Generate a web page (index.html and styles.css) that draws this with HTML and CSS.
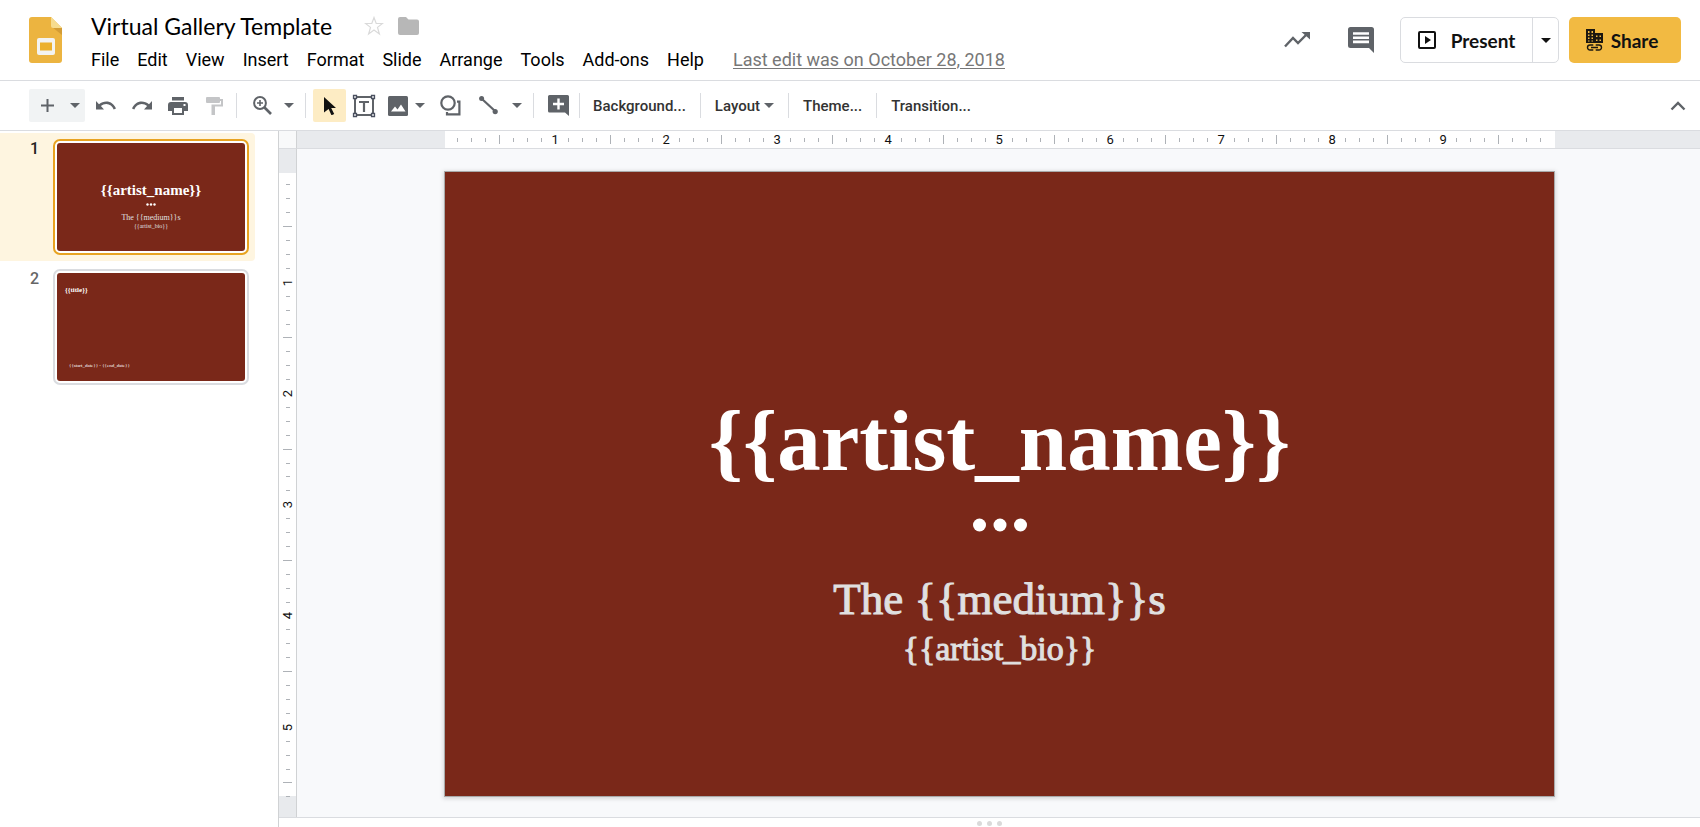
FILE: index.html
```html
<!DOCTYPE html>
<html lang="en">
<head>
<meta charset="utf-8">
<title>Virtual Gallery Template</title>
<link rel="stylesheet" href="styles.css">
</head>
<body>
<div class="app">
  <header class="header">
    <svg class="logo" viewBox="0 0 33 46" width="33" height="46" aria-label="Slides">
      <path fill="#ecb440" d="M3 0H22L33 11V43a3 3 0 0 1-3 3H3a3 3 0 0 1-3-3V3a3 3 0 0 1 3-3z"/>
      <path fill="#d39c35" d="M23 10l10 8v-7z"/>
      <path fill="#f6dc8f" d="M22 0l11 11H24a2 2 0 0 1-2-2z"/>
      <rect x="8" y="21" width="18" height="17" rx="2" fill="#f3f3f1"/>
      <rect x="11" y="25.500" width="12" height="8" fill="#ecb02c"/>
    </svg>
    <div class="title-block">
      <div class="title-row">
        <h1 class="title">Virtual Gallery Template</h1>
        <button class="plain" aria-label="Star"><svg width="20" height="20" viewBox="0 0 20 20"><path fill="none" stroke="#dadada" stroke-width="1.200" d="M10 1.500l2.200 6h6.300l-5 3.900 1.900 6.600L10 14l-5.400 4 1.900-6.600-5-3.900h6.300z"/></svg></button>
        <button class="plain" aria-label="Move"><svg width="21" height="18" viewBox="0 0 21 18"><path fill="#b7b7b7" d="M2 0h6l2.500 2.500H19a2 2 0 0 1 2 2V16a2 2 0 0 1-2 2H2a2 2 0 0 1-2-2V2a2 2 0 0 1 2-2z"/></svg></button>
      </div>
      <nav class="menu">
        <button>File</button><button>Edit</button><button>View</button><button>Insert</button><button>Format</button><button>Slide</button><button>Arrange</button><button>Tools</button><button>Add-ons</button><button>Help</button>
        <a class="last-edit" href="#">Last edit was on October 28, 2018</a>
      </nav>
    </div>
    <div class="actions">
      <button class="plain" aria-label="Activity"><svg width="26" height="18" viewBox="0 0 26 18"><path fill="none" stroke="#5f6368" stroke-width="2.400" d="M1 15.500l8-8.500 5 5L23.500 2.500"/><path fill="#5f6368" d="M17.500 1H26v7.500z"/></svg></button>
      <button class="plain" aria-label="Comments"><svg width="26" height="26" viewBox="0 0 26 26"><path fill="#5f6368" d="M2.500 0h21A2.500 2.500 0 0 1 26 2.500V26l-5-5H2.500A2.500 2.500 0 0 1 0 18.500v-16A2.500 2.500 0 0 1 2.500 0z"/><path stroke="#fff" stroke-width="2.600" d="M5 6.500h16M5 10.700h16M5 14.900h16"/></svg></button>
      <div class="present">
        <button class="present-main"><svg width="18" height="18" viewBox="0 0 18 18"><rect x="1" y="1" width="16" height="16" rx="1" fill="none" stroke="#111" stroke-width="2"/><path fill="#111" d="M7 5l6 4-6 4z"/></svg>Present</button>
        <button class="present-more" aria-label="Present options"><svg width="10" height="5" viewBox="0 0 10 5"><path fill="#111" d="M0 0h10L5 5z"/></svg></button>
      </div>
      <button class="share"><svg width="17" height="23" viewBox="0 0 17 23"><path fill="#1b1710" d="M0 0h9v4h8v10H0z"/><path fill="#f2ba42" d="M2 2h1.500v2H2zM5.500 2H7v2H5.500zM2 5.500h1.500v1.500H2zM5.500 5.500H7v1.500H5.500zM2 8.500h1.500v1.500H2zM5.500 8.500H7v1.500H5.500zM2 11.500h1.500v1H2zM5.500 11.500H7v1H5.500zM10 6.500h1.500v1.500H10zM13.500 6.500H15v1.500h-1.500zM10 10.500h1.500v1.500H10zM13.500 10.500H15v1.500h-1.500z"/><path fill="none" stroke="#1b1710" stroke-width="1.400" d="M7.300 16H4a2.500 2.500 0 0 0 0 5h3.300M9.700 16H13a2.500 2.500 0 0 1 0 5H9.700M5 18.500h7"/></svg>Share</button>
    </div>
  </header>

  <div class="toolbar">
    <div class="new-slide">
      <button aria-label="New slide"><svg width="13" height="13" viewBox="0 0 13 13"><path stroke="#5f6368" stroke-width="2" d="M6.500 0v13M0 6.500h13"/></svg></button>
      <button aria-label="New slide with layout"><svg class="caret" viewBox="0 0 10 5"><path d="M0 0h10L5 5z"/></svg></button>
    </div>
    <button class="tool" aria-label="Undo"><svg width="22" height="12" viewBox="0 0 22 12"><path fill="#5f6368" d="M1 1l3 3.200C6.200 2.300 8.700 1.400 11.300 1.400c4.400 0 8 2.700 9.700 7.100l-2.300.9c-1.300-3.300-4-5.400-7.400-5.400-2 0-3.900.7-5.400 2L9 9.500H1z"/></svg></button>
    <button class="tool" aria-label="Redo"><svg width="22" height="12" viewBox="0 0 22 12"><path fill="#5f6368" d="M21 1l-3 3.200c-2.200-1.900-4.700-2.800-7.300-2.800C6.300 1.400 2.700 4.100 1 8.500l2.300.9C4.600 6.100 7.300 4 10.700 4c2 0 3.900.7 5.400 2L13 9.500h8z"/></svg></button>
    <button class="tool" aria-label="Print"><svg width="20" height="18" viewBox="0 0 20 18"><path fill="#5f6368" d="M4 0h12v3.500H4zM3 5h14a3 3 0 0 1 3 3v6h-4v4H4v-4H0V8a3 3 0 0 1 3-3z"/><path fill="#fff" d="M6 11h8v5H6zM15.500 7h2v2h-2z"/></svg></button>
    <button class="tool" aria-label="Paint format"><svg width="17" height="18" viewBox="0 0 17 18"><path fill="#c4c5c7" d="M1 0h12a1 1 0 0 1 1 1v1h3v7.500H9V18H5.500V7.500H15V4h-1v1a1 1 0 0 1-1 1H1a1 1 0 0 1-1-1V1a1 1 0 0 1 1-1z"/></svg></button>
    <span class="sep sep-first"></span>
    <button class="tool" aria-label="Zoom"><svg width="19" height="19" viewBox="0 0 19 19"><circle cx="7" cy="7" r="5.900" fill="none" stroke="#5f6368" stroke-width="2"/><path stroke="#5f6368" stroke-width="2.600" d="M11.500 11.500l6.500 6.500"/><path stroke="#5f6368" stroke-width="1.600" d="M7 4v6M4 7h6"/></svg></button>
    <button class="drop" aria-label="Zoom options"><svg class="caret" viewBox="0 0 10 5"><path d="M0 0h10L5 5z"/></svg></button>
    <span class="sep"></span>
    <button class="tool active" aria-label="Select"><svg width="12" height="18" viewBox="0 0 12 18"><path fill="#111" d="M0 0l12 11H7.200l3 6-2.700 1.300-2.900-6.200L0 15.500z"/></svg></button>
    <button class="tool" aria-label="Text box"><svg width="24" height="24" viewBox="0 0 24 24"><g fill="none" stroke="#5f6368"><path stroke-width="2" d="M3 3h18v18H3z"/><path stroke-width="2.200" d="M7 8h10M12 8v10"/></g><g fill="#fff" stroke="#4a5060" stroke-width="1.300"><path d="M1.500 1.500h3v3h-3zM19.500 1.500h3v3h-3zM1.500 19.500h3v3h-3zM19.500 19.500h3v3h-3z"/></g></svg></button>
    <button class="tool narrow" aria-label="Image"><svg width="20" height="20" viewBox="0 0 20 20"><rect width="20" height="20" rx="1.500" fill="#5f6368"/><path fill="#fff" d="M3 15.500l4-5 2.500 3 3.500-5 4.500 7z"/></svg></button>
    <button class="drop tight" aria-label="Image options"><svg class="caret" viewBox="0 0 10 5"><path d="M0 0h10L5 5z"/></svg></button>
    <button class="tool shape" aria-label="Shape"><svg width="21" height="21" viewBox="0 0 21 21"><circle cx="8" cy="8" r="6.700" fill="none" stroke="#5f6368" stroke-width="2.200"/><path fill="none" stroke="#5f6368" stroke-width="2.200" d="M17 6.600h2.400v12.800H7V17"/></svg></button>
    <button class="tool line" aria-label="Line"><svg width="19" height="19" viewBox="0 0 19 19"><path stroke="#5f6368" stroke-width="2.200" d="M3 3l13 12"/><circle cx="2.600" cy="2.600" r="2.500" fill="#5f6368"/><circle cx="16.200" cy="15.600" r="2.600" fill="#5f6368"/></svg></button>
    <button class="drop" aria-label="Line options"><svg class="caret" viewBox="0 0 10 5"><path d="M0 0h10L5 5z"/></svg></button>
    <span class="sep"></span>
    <button class="tool comment" aria-label="Add comment"><svg width="21" height="21" viewBox="0 0 21 21"><path fill="#5f6368" d="M1.500 0h18A1.500 1.500 0 0 1 21 1.500V21l-4-3.500H1.500A1.500 1.500 0 0 1 0 16V1.500A1.500 1.500 0 0 1 1.500 0z"/><path stroke="#fff" stroke-width="2.400" d="M10.500 3.500v11M5 9h11"/></svg></button>
    <span class="sep sep-tight"></span>
    <button class="word">Background...</button>
    <span class="sep sep-word"></span>
    <button class="word">Layout<svg class="caret" viewBox="0 0 10 5"><path d="M0 0h10L5 5z"/></svg></button>
    <span class="sep sep-word"></span>
    <button class="word">Theme...</button>
    <span class="sep sep-word"></span>
    <button class="word">Transition...</button>
    <button class="plain collapse" aria-label="Hide the menus"><svg width="16" height="10" viewBox="0 0 16 10"><path fill="none" stroke="#5f6368" stroke-width="2.400" d="M1.500 8.500L8 2l6.500 6.500"/></svg></button>
  </div>

  <main class="workspace">
    <aside class="filmstrip">
      <div class="film-item selected">
        <span class="film-number">1</span>
        <div class="frame"><div class="thumb thumb-cover">
          <strong class="thumb-name">{{artist_name}}</strong>
          <svg width="10" height="3" viewBox="0 0 10 3" fill="#fff"><circle cx="1.500" cy="1.500" r="1.200"/><circle cx="5" cy="1.500" r="1.200"/><circle cx="8.500" cy="1.500" r="1.200"/></svg>
          <span class="thumb-medium">The {{medium}}s</span>
          <span class="thumb-bio">{{artist_bio}}</span>
        </div></div>
      </div>
      <div class="film-item">
        <span class="film-number">2</span>
        <div class="frame"><div class="thumb thumb-piece">
          <span class="thumb-title">{{title}}</span>
          <span class="thumb-dates">{{start_date}} - {{end_date}}</span>
        </div></div>
      </div>
    </aside>
    <section class="editor">
      <div class="corner"></div>
      <div class="ruler ruler-x"><div class="track" data-ticks="79"></div></div>
      <div class="ruler ruler-y"><div class="track" data-ticks="45"></div></div>
      <div class="canvas">
        <article class="slide">
          <h2 class="slide-name">{{artist_name}}</h2>
          <svg class="slide-dots" width="54" height="14" viewBox="0 0 54 14" fill="#fff"><circle cx="6.500" cy="7" r="6.500"/><circle cx="27" cy="7" r="6.500"/><circle cx="47.500" cy="7" r="6.500"/></svg>
          <p class="slide-medium">The {{medium}}s</p>
          <p class="slide-bio">{{artist_bio}}</p>
        </article>
      </div>
      <div class="notes"><span class="grip"></span><span class="grip"></span><span class="grip"></span></div>
    </section>
  </main>
</div>
<script src="ruler.js"></script>
</body>
</html>
```
FILE: styles.css
```css
* { box-sizing: border-box; }
body { margin: 0; font-family: Roboto, "Liberation Sans", sans-serif; color: #111; background: #fff; }
button { border: 0; background: none; padding: 0; margin: 0; font: inherit; color: inherit; display: flex; align-items: center; justify-content: center; cursor: pointer; }
svg { display: block; flex: none; }
h1, h2, p { margin: 0; font-weight: 400; }

.app { display: flex; flex-direction: column; height: 100vh; overflow: hidden; }

.header { display: flex; align-items: flex-start; height: 81px; flex: none; padding: 16px 19px 0 29px; border-bottom: 1px solid #dadce0; }
.logo { margin-top: 1px; }
.title-block { margin-left: 29px; }
.title-row { display: flex; align-items: center; height: 20px; }
.title { font-family: Lato, "Open Sans", sans-serif; font-size: 23px; line-height: 24px; margin-right: 32px; white-space: nowrap; color: #000; }
.title-row .plain + .plain { margin-left: 14px; }
.menu { display: flex; align-items: center; gap: 18px; margin-top: 12px; font-size: 18px; line-height: 24px; white-space: nowrap; color: #000; }
.last-edit { margin-left: 11px; color: #777; text-decoration: underline; text-underline-offset: 2px; }
.actions { display: flex; align-items: center; margin-left: auto; height: 46px; font-family: Lato, "Open Sans", sans-serif; font-weight: 700; font-size: 19px; color: #111; margin-top: 1px; }
.actions > .plain { margin-right: 38px; }
.actions > .plain + .plain { margin-right: 26px; }
.present { display: flex; height: 46px; border: 1px solid #dadce0; border-radius: 5px; margin-right: 10px; }
.present-main { gap: 15px; width: 131px; }
.present-more { width: 26px; border-left: 1px solid #dadce0; }
.share { width: 112px; height: 46px; gap: 8px; padding-right: 6px; background: #f2ba42; border-radius: 5px; }

.toolbar { display: flex; align-items: center; height: 50px; flex: none; padding: 0 14px 0 29px; border-bottom: 1px solid #dadce0; }
.new-slide { display: flex; width: 56px; height: 33px; margin-right: 3px; background: #f1f3f4; border-radius: 2px; }
.new-slide button { width: 36px; }
.new-slide button + button { width: 20px; }
.caret { width: 10px; height: 5px; fill: #5f6368; }
.tool { width: 36px; height: 33px; }
.active { width: 33px; background: #fdecc4; border-radius: 2px; }
.narrow { width: 32px; }
.drop { width: 18px; height: 33px; }
.tight { width: 12px; }
.shape { margin-left: 6px; }
.line { width: 40px; }
.comment { width: 34px; }
.sep { width: 1px; height: 25px; margin: 0 7px; background: #dadce0; }
.sep-first { margin: 0 7px 0 4px; }
.sep-tight { margin: 0 13px 0 4px; }
.sep-word { margin: 0 14px; }
.word { font-size: 15px; font-weight: 500; line-height: 20px; gap: 4px; color: #333; white-space: nowrap; }
.collapse { margin-left: auto; }

.workspace { display: flex; flex: 1; min-height: 0; }
.filmstrip { width: 278px; flex: none; padding-top: 2px; }
.film-item { display: flex; align-items: flex-start; width: 255px; height: 128px; padding: 6px 6px 0 29px; margin-bottom: 2px; border-radius: 0 4px 4px 0; }
.selected { background: #fef5e0; }
.film-number { width: 24px; font-size: 16px; font-weight: 500; line-height: 20px; padding-left: 1px; color: #666; }
.selected .film-number { color: #222; }
.frame { flex: 1; height: 116px; padding: 2px; border: 2px solid #dadce0; border-radius: 7px; background: #fff; }
.selected .frame { border-color: #e8a321; }
.thumb { display: flex; flex-direction: column; height: 100%; background: #7a2819; border-radius: 3px; color: #fff; font-family: "Liberation Serif", serif; white-space: nowrap; }
.thumb-cover { align-items: center; padding-top: 38px; }
.thumb-name { font-size: 15px; line-height: 18px; margin-bottom: 4px; }
.thumb-medium { font-size: 8px; line-height: 9px; margin-top: 7px; color: #e0e0e0; }
.thumb-bio { font-size: 6px; line-height: 8px; color: #e0e0e0; }
.thumb-piece { justify-content: space-between; padding: 12px 8px; }
.thumb-title { font-size: 7px; line-height: 10px; font-weight: 700; }
.thumb-dates { font-size: 5px; line-height: 6px; padding-left: 4px; }

.editor { display: grid; grid-template: 18px 1fr 10px / 18px 1fr; flex: 1; border-left: 1px solid #d0d2d4; }
.corner { background: #f8f9fa; border-right: 1px solid #d0d2d4; border-bottom: 1px solid #dadce0; }
.ruler { background: #e8eaed; display: grid; font-size: 13px; line-height: 13px; }
.ruler-x { grid-template-columns: 1fr; padding: 0 145px 0 148px; border-bottom: 1px solid #dadce0; }
.ruler-y { padding: 24px 0 21px; border-right: 1px solid #d0d2d4; }
.track { display: flex; background: #fff; min-width: 0; min-height: 0; }
.ruler-x .track { padding: 0 8px 0 6px; }
.ruler-y .track { flex-direction: column; padding-top: 5px; }
.cell { flex: 1; min-width: 0; min-height: 0; display: flex; align-items: center; justify-content: center; }
.tick { width: 1px; height: 4px; background: #aeb2b7; }
.half .tick { height: 9px; }
.ruler-y .tick { width: 4px; height: 1px; }
.ruler-y .half .tick { width: 9px; }
.ruler-y .cell { flex: none; height: calc(100% / 44.4); }
.ruler-y .number { writing-mode: vertical-rl; transform: rotate(180deg); }
.canvas { padding: 23px 146px 21px 148px; background: #f8f9fb; }
.slide { display: flex; flex-direction: column; align-items: center; height: 100%; padding-top: 219px; background: #7a2819; color: #e0e0e0; box-shadow: 0 0 0 1px #a9a9a9, 0 1px 4px 2px #0002; font-family: "Liberation Serif", serif; white-space: nowrap; }
.slide-name { font-size: 87px; line-height: 100px; font-weight: 700; color: #fff; }
.slide-dots { margin-top: 27px; }
.slide-medium { font-size: 45px; line-height: 52px; margin-top: 41px; -webkit-text-stroke: 1px #e0e0e0; }
.slide-bio { font-size: 34px; line-height: 48px; -webkit-text-stroke: 1px #e0e0e0; }
.notes { display: flex; justify-content: center; gap: 5px; border-top: 1px solid #dadce0; padding-top: 3px; background: #fff; grid-column: 1 / -1; }
.grip { width: 5px; height: 5px; border-radius: 50%; background: #dadada; }
```
FILE: ruler.js
```js
// Fills each ruler with eighth-inch marks and whole-inch numbers.
document.querySelectorAll('.track').forEach(function (track) {
  var total = Number(track.dataset.ticks);
  for (var i = 1; i <= total; i++) {
    var cell = document.createElement('span');
    var mark = document.createElement('span');
    cell.className = i % 8 === 4 ? 'cell half' : 'cell';
    if (i % 8 === 0) {
      mark.className = 'number';
      mark.textContent = i / 8;
    } else {
      mark.className = 'tick';
    }
    cell.appendChild(mark);
    track.appendChild(cell);
  }
});
```
